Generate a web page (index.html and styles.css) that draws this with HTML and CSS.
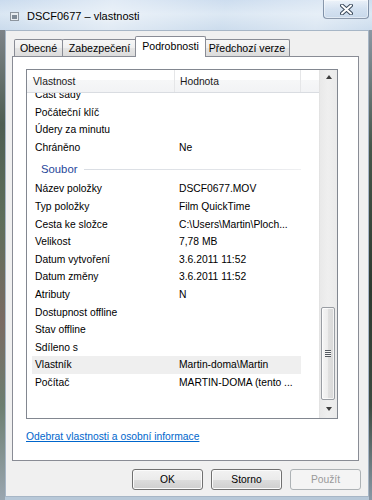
FILE: index.html
```html
<!DOCTYPE html>
<html lang="cs">
<head>
<meta charset="utf-8">
<title>DSCF0677 – vlastnosti</title>
<link rel="stylesheet" href="styles.css">
</head>
<body>
<div class="window">
  <div class="titlebar">
    <svg class="app-icon" width="9" height="9" viewBox="0 0 9 9">
      <rect x="0.5" y="0.5" width="8" height="8" fill="#e8ecf0" stroke="#8d959e"/>
      <rect x="2" y="3" width="5" height="4" fill="#7f8a96"/>
    </svg>
    <div class="title">DSCF0677 – vlastnosti</div>
    <div class="close">
      <svg width="13" height="11" viewBox="0 0 13 11">
        <path d="M2 1.5 L11 9.5 M11 1.5 L2 9.5" stroke="#3b4a5c" stroke-width="4" stroke-linecap="round"/>
        <path d="M2 1.5 L11 9.5 M11 1.5 L2 9.5" stroke="#ffffff" stroke-width="2" stroke-linecap="round"/>
      </svg>
    </div>
  </div>
  <div class="client">
    <div class="tabs">
      <div class="tab t1">Obecné</div>
      <div class="tab t2">Zabezpečení</div>
      <div class="tab t3 active">Podrobnosti</div>
      <div class="tab t4">Předchozí verze</div>
    </div>
    <div class="panel">
      <div class="listview">
        <div class="lv-main">
          <div class="lv-header">
            <div class="hcell h1">Vlastnost</div>
            <div class="hcell h2">Hodnota</div>
            <div class="hcell h3"></div>
          </div>
          <div class="rows">
            <div class="row first"><span class="k">Část sady</span><span class="v"></span></div>
            <div class="row"><span class="k">Počáteční klíč</span><span class="v"></span></div>
            <div class="row"><span class="k">Údery za minutu</span><span class="v"></span></div>
            <div class="row"><span class="k">Chráněno</span><span class="v">Ne</span></div>
            <div class="group"><span class="gname">Soubor</span><span class="gline"></span></div>
            <div class="row"><span class="k">Název položky</span><span class="v">DSCF0677.MOV</span></div>
            <div class="row"><span class="k">Typ položky</span><span class="v">Film QuickTime</span></div>
            <div class="row"><span class="k">Cesta ke složce</span><span class="v">C:\Users\Martin\Ploch...</span></div>
            <div class="row"><span class="k">Velikost</span><span class="v">7,78 MB</span></div>
            <div class="row"><span class="k">Datum vytvoření</span><span class="v">3.6.2011 11:52</span></div>
            <div class="row"><span class="k">Datum změny</span><span class="v">3.6.2011 11:52</span></div>
            <div class="row"><span class="k">Atributy</span><span class="v">N</span></div>
            <div class="row"><span class="k">Dostupnost offline</span><span class="v"></span></div>
            <div class="row"><span class="k">Stav offline</span><span class="v"></span></div>
            <div class="row"><span class="k">Sdíleno s</span><span class="v"></span></div>
            <div class="row hot"><span class="k">Vlastník</span><span class="v">Martin-doma\Martin</span></div>
            <div class="row"><span class="k">Počítač</span><span class="v">MARTIN-DOMA (tento ...</span></div>
          </div>
        </div>
        <div class="scrollbar">
          <div class="sb-btn"><span class="arrow up"></span></div>
          <div class="sb-space"></div>
          <div class="thumb"><span class="grip"></span></div>
          <div class="sb-btn"><span class="arrow down"></span></div>
        </div>
      </div>
      <a class="link" href="#">Odebrat vlastnosti a osobní informace</a>
    </div>
    <div class="buttons">
      <button class="btn">OK</button>
      <button class="btn">Storno</button>
      <button class="btn disabled">Použít</button>
    </div>
  </div>
</div>
</body>
</html>
```
FILE: styles.css
```css
* { box-sizing: border-box; }
html, body { margin: 0; padding: 0; }
body {
  width: 372px;
  height: 500px;
  overflow: hidden;
  font-family: "Liberation Sans", Arial, sans-serif;
  font-size: 10.3px;
  color: #000;
}
.window {
  width: 372px;
  height: 500px;
  display: flex;
  flex-direction: column;
  background:
    linear-gradient(to bottom, #7d8388 0%, #4e5e52 20%, #5d6e5a 40%, #7a6a62 62%, #6c7e70 80%, #9aa6b0 100%) left 30px / 5px calc(100% - 30px) no-repeat,
    linear-gradient(to bottom, #8c97a3 0%, #47564a 25%, #2e3a30 55%, #3d4a40 80%, #8a98a6 100%) right 30px / 3px calc(100% - 30px) no-repeat,
    linear-gradient(to bottom, #c4d7ec 0px, #d6e4f2 14px, #c3d6ea 30px, #b7c8d8 100%);
}
.titlebar {
  height: 30px;
  display: flex;
  align-items: flex-start;
  flex: none;
  background: linear-gradient(100deg, rgba(255,255,255,0.1) 0%, rgba(255,255,255,0.5) 30%, rgba(255,255,255,0.15) 60%, rgba(255,255,255,0.4) 85%, rgba(255,255,255,0.15) 100%);
}
.app-icon { margin: 12px 0 0 10px; flex: none; }
.title {
  margin: 10px 0 0 8px;
  font-size: 11px;
  line-height: 12px;
  color: #000;
  text-shadow: 0 0 6px rgba(255,255,255,0.9);
}
.close {
  margin-left: auto;
  margin-right: 3px;
  width: 46px;
  height: 19px;
  border: 1px solid rgba(60,80,110,0.55);
  border-top: none;
  border-radius: 0 0 4px 4px;
  background: linear-gradient(to bottom, rgba(255,255,255,0.55), rgba(205,220,238,0.55) 50%, rgba(185,205,228,0.6));
  box-shadow: inset 0 0 0 1px rgba(255,255,255,0.45);
  display: flex;
  align-items: center;
  justify-content: center;
}
.client {
  flex: 1;
  margin: 0 3px 3px 5px;
  background: #f0f0f0;
  border: 1px solid #a7b6c6;
  padding: 5px 9px 0 6px;
  display: flex;
  flex-direction: column;
}
.tabs {
  display: flex;
  align-items: flex-end;
  height: 20px;
  margin-left: 2px;
  flex: none;
}
.tab {
  height: 17px;
  border: 1px solid #898c95;
  border-bottom: none;
  border-radius: 2px 2px 0 0;
  background: linear-gradient(to bottom, #f7f7f7 0%, #efefef 50%, #e5e5e5 51%, #dcdcdc 100%);
  text-align: center;
  line-height: 17px;
  font-size: 10.6px;
  white-space: nowrap;
  color: #000;
}
.t1 { width: 49px; }
.t2 { width: 75px; margin-left: -1px; }
.t3 { width: 71px; margin-left: -2px; }
.t4 { width: 86px; margin-left: -2px; }
.tab.active {
  height: 21px;
  margin-bottom: -1px;
  background: #ffffff;
  z-index: 1;
  line-height: 19px;
}
.panel {
  flex: none;
  height: 405px;
  border: 1px solid #898c95;
  background: #ffffff;
  padding: 12px 0 0 13px;
  display: flex;
  flex-direction: column;
  align-items: flex-start;
}
.listview {
  width: 312px;
  height: 350px;
  border: 1px solid #828790;
  display: flex;
  flex: none;
}
.lv-main {
  flex: 1;
  display: flex;
  flex-direction: column;
  min-width: 0;
}
.lv-header {
  height: 23px;
  display: flex;
  flex: none;
  border-bottom: 1px solid #d9dce1;
  background: linear-gradient(to bottom, #ffffff 0%, #ffffff 45%, #f6f7f8 46%, #f2f3f5 100%);
}
.hcell {
  padding-top: 2px;
  line-height: 20px;
  color: #1a1a1a;
  white-space: nowrap;
}
.h1 { width: 148px; padding-left: 6px; border-right: 1px solid #e5e6e8; }
.h2 { width: 126px; padding-left: 5px; border-right: 1px solid #e5e6e8; }
.h3 { flex: 1; }
.rows {
  flex: 1;
  overflow: hidden;
  padding-left: 5px;
}
.row {
  display: flex;
  width: 269px;
  height: 17.6px;
  line-height: 17.6px;
  white-space: nowrap;
}
.row.first { margin-top: -7px; }
.row.hot { background: #efefef; }
.k { width: 144px; padding-left: 3px; flex: none; }
.v { flex: 1; padding-left: 3px; overflow: hidden; }
.group {
  height: 24px;
  display: flex;
  align-items: center;
  padding: 2px 0 0 9px;
  width: 269px;
}
.gname {
  color: #26479a;
  font-size: 11.3px;
}
.gline {
  flex: 1;
  height: 1px;
  margin-left: 7px;
  margin-top: 1px;
  background: linear-gradient(to right, #d9dde3, #e4e6ea 80%, #eff0f2);
}
.scrollbar {
  width: 18px;
  flex: none;
  display: flex;
  flex-direction: column;
  background: linear-gradient(to right, #dcdcdc 0, #e9e9e9 1px, #efefef 50%, #eaeaea 100%);
  padding-bottom: 1px;
}
.sb-btn {
  height: 17px;
  flex: none;
  display: flex;
  align-items: center;
  justify-content: center;
}
.sb-space { flex: 1; }
.arrow {
  width: 0;
  height: 0;
  border-left: 3.5px solid transparent;
  border-right: 3.5px solid transparent;
  margin-left: 1px;
}
.arrow.up { border-bottom: 4px solid #3d3d3d; margin-top: -3px; }
.arrow.down { border-top: 4px solid #3d3d3d; margin-top: 1px; }
.thumb {
  height: 93px;
  flex: none;
  margin: 0 2px 0 2px;
  border: 1px solid #999da3;
  border-radius: 2px;
  background: linear-gradient(to right, #f6f6f6 0%, #ececec 50%, #e0e0e0 51%, #d8d8d8 100%);
  box-shadow: inset 0 0 0 1px rgba(255,255,255,0.7);
  display: flex;
  align-items: center;
  justify-content: center;
}
.grip {
  width: 6px;
  height: 7px;
  background: repeating-linear-gradient(to bottom, #555a60 0, #555a60 1px, #f6f6f6 1px, #f6f6f6 2px);
}
.link {
  margin-top: 11px;
  line-height: 14px;
  color: #0066cc;
  text-decoration: underline;
}
.buttons {
  display: flex;
  justify-content: flex-end;
  gap: 8px;
  margin-top: 8px;
  margin-right: -2px;
}
.btn {
  width: 71px;
  height: 21px;
  border: 1px solid #707070;
  border-radius: 3px;
  background: linear-gradient(to bottom, #f2f2f2 0%, #ebebeb 50%, #dddddd 51%, #cfcfcf 100%);
  box-shadow: inset 0 0 0 1px #fbfbfb;
  font-family: "Liberation Sans", Arial, sans-serif;
  font-size: 10.3px;
  color: #000;
  padding: 0;
}
.btn.disabled {
  border-color: #adb2b5;
  background: #f4f4f4;
  box-shadow: none;
  color: #9a9a9a;
}
```
